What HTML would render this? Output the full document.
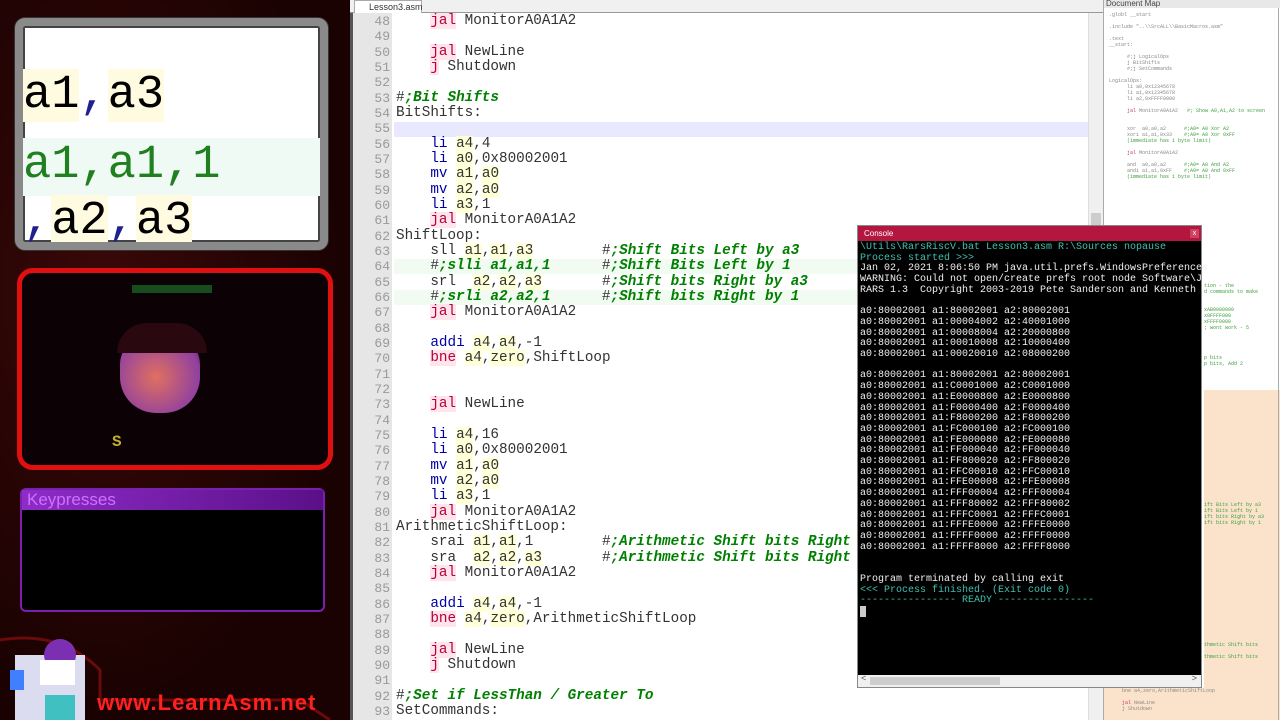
<!DOCTYPE html>
<html><head><meta charset="utf-8"><style>
*{margin:0;padding:0;box-sizing:border-box}
body{width:1280px;height:720px;overflow:hidden;background:#fff;position:relative;font-family:"Liberation Mono",monospace}
#left{position:absolute;left:0;top:0;width:350px;height:720px;background:radial-gradient(ellipse at 30% 40%,#3a0808,#1a0202 70%);}
#zoombox{position:absolute;left:15px;top:18px;width:313px;height:232px;border:8px solid #8a8a8a;border-radius:10px;background:#fff;box-shadow:inset 0 0 0 2px #444,0 0 0 1px #333;overflow:hidden}
.big{position:absolute;font-family:"Liberation Mono",monospace;font-size:47px;font-weight:normal;white-space:pre;line-height:56px}
#cam{position:absolute;left:17px;top:268px;width:316px;height:202px;border:5px solid #e01010;border-radius:16px;background:#0c0104}
#keys{position:absolute;left:20px;top:488px;width:305px;height:124px;border:2px solid #7a1fb0;border-radius:6px;background:#000}
#keys .t{height:20px;background:linear-gradient(90deg,#8e2cc8,#5a1088);color:#d070ff;font-family:"Liberation Sans",sans-serif;font-size:17px;padding-left:5px;line-height:20px}
#logo{position:absolute;left:97px;top:690px;color:#ff2020;font-family:"Liberation Sans",sans-serif;font-size:22px;font-weight:bold;letter-spacing:1px}
#tabbar{position:absolute;left:350px;top:0;width:753px;height:13px;background:#f0f0f0;border-bottom:1px solid #999}
#tab{position:absolute;left:4px;top:0;height:13px;width:68px;background:#fff;border:1px solid #aaa;border-bottom:none;font-family:"Liberation Sans",sans-serif;font-size:9px;line-height:12px;padding-left:14px;color:#333}
#gut{position:absolute;left:350px;top:13px;width:42px;height:707px;background:#e6e6e6;border-left:3px solid #555}
#code{position:absolute;left:350px;top:13px;width:740px;height:707px}
.ln{position:absolute;left:0;width:40px;text-align:right;color:#999;font-size:13px}
.l{position:absolute;left:46px;font-size:14.3px;white-space:pre;color:#333;height:15px;line-height:15px}
.k{color:#b8003c;background:#ffe4ec}
.b{color:#0000a8}
.r{background:#ffffd8}
.c{color:#008000;font-style:italic;font-weight:bold}
#vs{position:absolute;left:1088px;top:13px;width:15px;height:707px;background:#f0f0f0;border-left:1px solid #ddd}
#dm{position:absolute;left:1103px;top:0;width:177px;height:720px;background:#fff;border-left:1px solid #aaa}
#dm .h{height:8px;background:#e8e8e8;font-family:"Liberation Sans",sans-serif;font-size:8px;line-height:8px;color:#444;padding-left:2px}
.dl{position:absolute;font-size:5px;white-space:pre;color:#888;font-family:"Liberation Mono",monospace}
.dg{color:#40a040}
#con{position:absolute;left:857px;top:225px;width:345px;height:463px;background:#000;border:1px solid #888}
#con .t{height:15px;background:#b3163f;color:#fff;font-family:"Liberation Sans",sans-serif;font-size:8px;line-height:15px;padding-left:6px}
#con pre{position:absolute;left:2px;top:17px;font-family:"Liberation Mono",monospace;font-size:10px;line-height:10.7px;color:#f0f0f0}
.tq{color:#40c0b0}
#csb{position:absolute;left:0;bottom:0;width:343px;height:12px;background:#f0f0f0}
</style></head><body>
<div id="left">
 <div id="zoombox">
  <div style="position:absolute;left:0;top:112px;width:300px;height:58px;background:#f0faf4"></div>
  <div class="big" style="left:0;top:42px"><span style="background:#fffbe0">a1</span><span style="color:#202090">,</span><span style="background:#fffbe0">a3</span></div>
  <div class="big" style="left:0;top:112px;color:#208020">a1,a1,1</div>
  <div class="big" style="left:0;top:168px"><span style="color:#202090">,</span><span style="background:#fffbe0">a2</span><span style="color:#202090">,</span><span style="background:#fffbe0">a3</span></div>
 </div>
 <div id="cam">
  <div style="position:absolute;left:98px;top:60px;width:80px;height:80px;border-radius:40% 40% 45% 45%;background:radial-gradient(circle at 45% 55%,#e07060,#9040a0 70%,#300818)"></div>
  <div style="position:absolute;left:95px;top:50px;width:90px;height:30px;border-radius:45px 45px 0 0;background:#2a0810"></div>
  <div style="position:absolute;left:90px;top:160px;width:110px;height:20px;color:#c0b030;font-size:16px;font-weight:bold">S</div>
  <div style="position:absolute;left:110px;top:12px;width:80px;height:8px;background:#208030;opacity:.6"></div>
 </div>
 <div id="keys"><div class="t">Keypresses</div></div>
 <svg style="position:absolute;left:0;top:600px" width="350" height="120"><path d="M0 40 Q60 30 100 70 L100 100 L300 100 L330 120" stroke="#6a0a0a" stroke-width="3" fill="none"/><rect x="15" y="55" width="70" height="65" fill="#dcdcf0"/><circle cx="60" cy="55" r="16" fill="#7a30b0"/><rect x="40" y="60" width="35" height="25" fill="#fff"/><rect x="10" y="70" width="14" height="20" fill="#4080ff"/><rect x="45" y="95" width="30" height="25" fill="#40c0c0"/></svg>
 <div id="logo">www.LearnAsm.net</div>
</div>

<div id="tabbar"><div id="tab">Lesson3.asm <span style="color:#c00">☒</span></div></div>
<div id="gut"></div>
<div id="code">
<div style="position:absolute;left:44px;top:109px;width:694px;height:15px;background:#e8e8ff"></div>
<div style="position:absolute;left:44px;top:246px;width:694px;height:15px;background:#f2fbf2"></div>
<div style="position:absolute;left:44px;top:277px;width:694px;height:15px;background:#f2fbf2"></div>
<div id="lines"></div>
</div>
<div id="vs"><div style="position:absolute;left:2px;top:200px;width:10px;height:30px;background:#cdcdcd"></div></div>
<div id="dm"><div class="h">Document Map</div>
<div style="position:absolute;left:100px;top:390px;width:77px;height:330px;background:#fbe3cb"></div>
<div style="position:absolute;left:0;top:688px;width:100px;height:32px;background:#fbe3cb"></div>
<div class="dl" style="left:5px;top:12px">.globl __start

.include "..\\SrcALL\\BasicMacros.asm"

.text
__start:

      #;j LogicalOps
      j BitShifts
      #;j SetCommands

LogicalOps:
      li a0,0x12345678
      li a1,0x12345678
      li a2,0xFFFF0000

      <span style="color:#c04060">jal</span> MonitorA0A1A2   <span class="dg">#; Show A0,A1,A2 to screen</span>


      xor  a0,a0,a2      <span class="dg">#;A0= A0 Xor A2</span>
      xori a1,a1,0x33    <span class="dg">#;A0= A0 Xor 0xFF</span>
      <span class="dg">(immediate has 1 byte limit)</span>

      <span style="color:#c04060">jal</span> MonitorA0A1A2

      and  a0,a0,a2      <span class="dg">#;A0= A0 And A2</span>
      andi a1,a1,0xFF    <span class="dg">#;A0= A0 And 0xFF</span>
      <span class="dg">(immediate has 1 byte limit)</span></div>
<div class="dl dg" style="left:100px;top:283px">tion - the
d commands to make


xAB0000000
x0FFFF000
xFFFF0000
; wont work - 5




p bits
p bits, Add 2</div>
<div class="dl dg" style="left:100px;top:502px">ift Bits Left by a3
ift Bits Left by 1
ift bits Right by a3
ift bits Right by 1</div>
<div class="dl dg" style="left:100px;top:642px">thmetic Shift bits

thmetic Shift bits</div>
<div class="dl" style="left:18px;top:688px">bne a4,zero,ArithmeticShiftLoop

<span style="color:#c04060">jal</span> NewLine
j Shutdown</div>
<div style="position:absolute;left:174px;top:8px;width:1px;height:712px;background:#aaa"></div>
</div>

<div id="con"><div class="t">Console<span style="position:absolute;right:2px;top:3px;width:9px;height:9px;background:#d04060;color:#fff;font-size:7px;line-height:9px;text-align:center">x</span></div>
<pre><span class="tq">\Utils\RarsRiscV.bat Lesson3.asm R:\Sources nopause
Process started &gt;&gt;&gt;</span>
Jan 02, 2021 8:06:50 PM java.util.prefs.WindowsPreferences
WARNING: Could not open/create prefs root node Software\J
RARS 1.3  Copyright 2003-2019 Pete Sanderson and Kenneth

a0:80002001 a1:80002001 a2:80002001
a0:80002001 a1:00004002 a2:40001000
a0:80002001 a1:00008004 a2:20000800
a0:80002001 a1:00010008 a2:10000400
a0:80002001 a1:00020010 a2:08000200

a0:80002001 a1:80002001 a2:80002001
a0:80002001 a1:C0001000 a2:C0001000
a0:80002001 a1:E0000800 a2:E0000800
a0:80002001 a1:F0000400 a2:F0000400
a0:80002001 a1:F8000200 a2:F8000200
a0:80002001 a1:FC000100 a2:FC000100
a0:80002001 a1:FE000080 a2:FE000080
a0:80002001 a1:FF000040 a2:FF000040
a0:80002001 a1:FF800020 a2:FF800020
a0:80002001 a1:FFC00010 a2:FFC00010
a0:80002001 a1:FFE00008 a2:FFE00008
a0:80002001 a1:FFF00004 a2:FFF00004
a0:80002001 a1:FFF80002 a2:FFF80002
a0:80002001 a1:FFFC0001 a2:FFFC0001
a0:80002001 a1:FFFE0000 a2:FFFE0000
a0:80002001 a1:FFFF0000 a2:FFFF0000
a0:80002001 a1:FFFF8000 a2:FFFF8000


Program terminated by calling exit
<span class="tq">&lt;&lt;&lt; Process finished. (Exit code 0)
---------------- READY ----------------</span>
<span style="background:#ccc"> </span></pre>
<div id="csb"><span style="position:absolute;left:3px;top:-1px;font-size:9px;color:#555">&lt;</span><div style="position:absolute;left:12px;top:2px;width:130px;height:8px;background:#cdcdcd"></div><span style="position:absolute;right:4px;top:-1px;font-size:9px;color:#555">&gt;</span></div>
</div>

<script>
const L=[
[48,'    <k>jal</k> MonitorA0A1A2'],[49,''],[50,'    <k>jal</k> NewLine'],[51,'    <k>j</k> Shutdown'],[52,''],
[53,'#<c>;Bit Shifts</c>'],[54,'BitShifts:'],[55,''],
[56,'    <b>li</b> <r>a4</r>,4'],[57,'    <b>li</b> <r>a0</r>,0x80002001'],[58,'    <b>mv</b> <r>a1</r>,<r>a0</r>'],[59,'    <b>mv</b> <r>a2</r>,<r>a0</r>'],[60,'    <b>li</b> <r>a3</r>,1'],[61,'    <k>jal</k> MonitorA0A1A2'],
[62,'ShiftLoop:'],
[63,'    sll <r>a1</r>,<r>a1</r>,<r>a3</r>        #<c>;Shift Bits Left by a3</c>'],
[64,'    #<c>;slli a1,a1,1</c>      #<c>;Shift Bits Left by 1</c>'],
[65,'    srl  <r>a2</r>,<r>a2</r>,<r>a3</r>       #<c>;Shift bits Right by a3</c>'],
[66,'    #<c>;srli a2,a2,1</c>      #<c>;Shift bits Right by 1</c>'],
[67,'    <k>jal</k> MonitorA0A1A2'],[68,''],
[69,'    <b>addi</b> <r>a4</r>,<r>a4</r>,-1'],[70,'    <k>bne</k> <r>a4</r>,<r>zero</r>,ShiftLoop'],[71,''],[72,''],
[73,'    <k>jal</k> NewLine'],[74,''],
[75,'    <b>li</b> <r>a4</r>,16'],[76,'    <b>li</b> <r>a0</r>,0x80002001'],[77,'    <b>mv</b> <r>a1</r>,<r>a0</r>'],[78,'    <b>mv</b> <r>a2</r>,<r>a0</r>'],[79,'    <b>li</b> <r>a3</r>,1'],[80,'    <k>jal</k> MonitorA0A1A2'],
[81,'ArithmeticShiftLoop:'],
[82,'    srai <r>a1</r>,<r>a1</r>,1        #<c>;Arithmetic Shift bits Right</c>'],
[83,'    sra  <r>a2</r>,<r>a2</r>,<r>a3</r>       #<c>;Arithmetic Shift bits Right</c>'],
[84,'    <k>jal</k> MonitorA0A1A2'],[85,''],
[86,'    <b>addi</b> <r>a4</r>,<r>a4</r>,-1'],[87,'    <k>bne</k> <r>a4</r>,<r>zero</r>,ArithmeticShiftLoop'],[88,''],
[89,'    <k>jal</k> NewLine'],[90,'    <k>j</k> Shutdown'],[91,''],
[92,'#<c>;Set if LessThan / Greater To</c>'],[93,'SetCommands:']];
let h='';
L.forEach((x,i)=>{const y=1+i*15.33;
const s=x[1].replace(/<(k|b|r|c)>/g,'<span class="$1">').replace(/<\/(k|b|r|c)>/g,'</span>');
h+=`<div class="ln" style="top:${y}px">${x[0]}</div><div class="l" style="top:${y}px">${s}</div>`;});
document.getElementById('lines').innerHTML=h;
</script>
</body></html>
